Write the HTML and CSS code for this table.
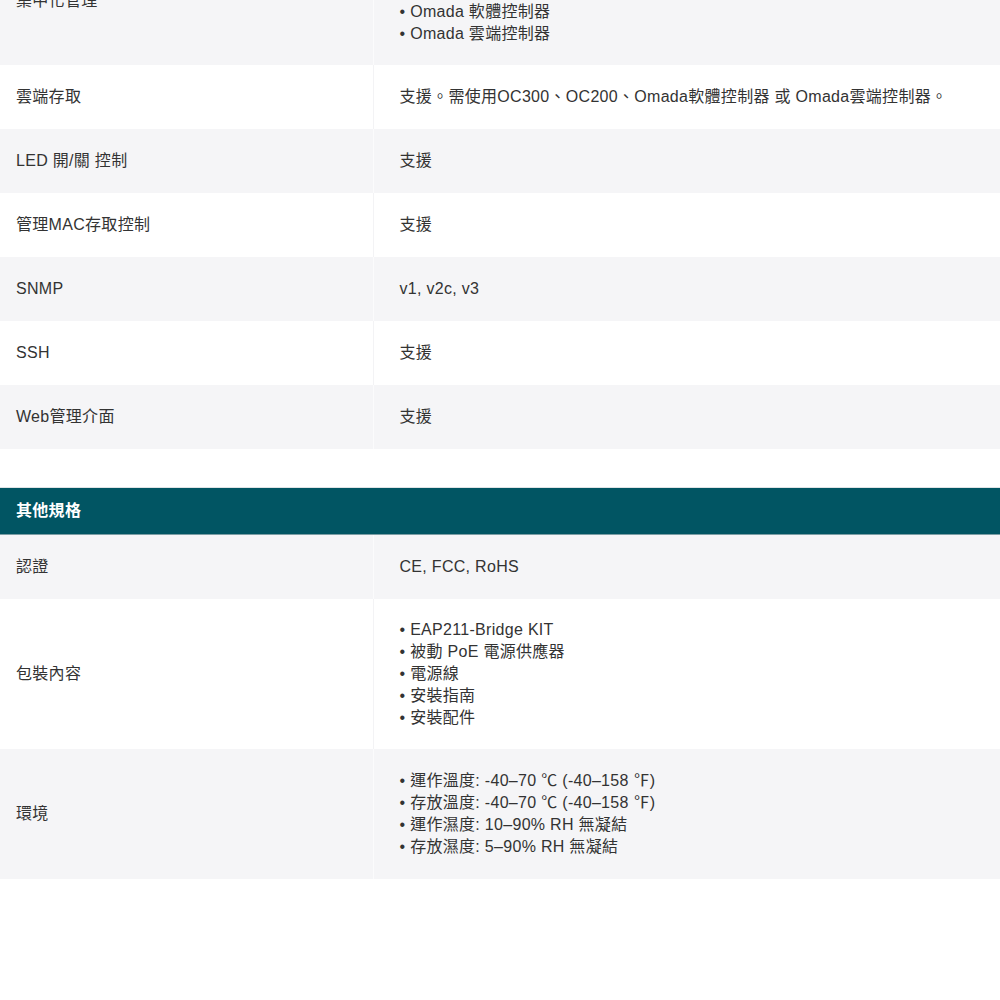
FILE: index.html
```html
<!DOCTYPE html>
<html lang="zh-TW">
<head>
  <meta charset="UTF-8" />
  <title>EAP211-Bridge KIT 規格</title>
  <link rel="stylesheet" href="styles.css">
</head>
<body>

<div class="spec-wrap">
  <!-- 管理功能 -->
  <table class="spec-table">
    <tr class="row-gray">
      <td class="spec-name">集中化管理</td>
      <td class="spec-value">
        <div>• Omada 硬體控制器 (OC300)</div>
        <div>• Omada 硬體控制器 <span class="link-line">(OC200)</span></div>
        <div>• Omada 軟體控制器</div>
        <div>• Omada 雲端控制器</div>
      </td>
    </tr>
    <tr class="row-white">
      <td class="spec-name">雲端存取</td>
      <td class="spec-value">支援。需使用OC300、OC200、Omada軟體控制器 或 Omada雲端控制器。</td>
    </tr>
    <tr class="row-gray">
      <td class="spec-name">LED 開/關 控制</td>
      <td class="spec-value">支援</td>
    </tr>
    <tr class="row-white">
      <td class="spec-name">管理MAC存取控制</td>
      <td class="spec-value">支援</td>
    </tr>
    <tr class="row-gray">
      <td class="spec-name">SNMP</td>
      <td class="spec-value">v1, v2c, v3</td>
    </tr>
    <tr class="row-white">
      <td class="spec-name">SSH</td>
      <td class="spec-value">支援</td>
    </tr>
    <tr class="row-gray">
      <td class="spec-name">Web管理介面</td>
      <td class="spec-value">支援</td>
    </tr>
  </table>

  <!-- 其他規格 -->
  <div class="spec-title">其他規格</div>
  <table class="spec-table">
    <tr class="row-gray">
      <td class="spec-name">認證</td>
      <td class="spec-value">CE, FCC, RoHS</td>
    </tr>
    <tr class="row-white">
      <td class="spec-name">包裝內容</td>
      <td class="spec-value tall-5">
        <div>• EAP211-Bridge KIT</div>
        <div>• 被動 PoE 電源供應器</div>
        <div>• 電源線</div>
        <div>• 安裝指南</div>
        <div>• 安裝配件</div>
      </td>
    </tr>
    <tr class="row-gray">
      <td class="spec-name">環境</td>
      <td class="spec-value tall-4">
        <div>• 運作溫度: -40–70 ℃ (-40–158 ℉)</div>
        <div>• 存放溫度: -40–70 ℃ (-40–158 ℉)</div>
        <div>• 運作濕度: 10–90% RH 無凝結</div>
        <div>• 存放濕度: 5–90% RH 無凝結</div>
      </td>
    </tr>
  </table>
</div>

</body>
</html>
```

FILE: styles.css
```css
/* 規格表 */
body {
    margin: 0;
    background: #fff;
    font-family: "Liberation Sans", Arial, "Noto Sans CJK TC", sans-serif;
    font-size: 16px;
    color: #333;
    letter-spacing: 0.3px;
}
.spec-wrap {
    margin-top: -63px;
}
.spec-table {
    width: 1000px;
    border-collapse: collapse;
    table-layout: fixed;
}
.spec-table td {
    box-sizing: border-box;
    height: 64px;
    padding: 20px 16px;
    line-height: 22px;
    vertical-align: middle;
}
.spec-name {
    width: 373px;
}
.spec-value {
    padding-left: 26px !important;
}
.tall-5 {
    height: 150px !important;
}
.tall-4 {
    height: 130px !important;
}
.row-gray td {
    background: #f5f5f7;
}
.row-gray .spec-name {
    border-right: 1px solid #fbfbfc;
}
.row-white td {
    background: #fff;
}
.row-white .spec-name {
    border-right: 1px solid #f3f3f5;
}
.link-line {
    color: transparent;
    border-bottom: 2px solid #7fdede;
}

/* 區塊標題 */
.spec-title {
    margin-top: 38px;
    height: 46px;
    padding: 0 16px;
    background: #015563;
    border-top: 1px solid #dfe3e5;
    border-bottom: 1px solid #7c9ea5;
    color: #fff;
    font-weight: bold;
    font-size: 16px;
    line-height: 46px;
}
```
